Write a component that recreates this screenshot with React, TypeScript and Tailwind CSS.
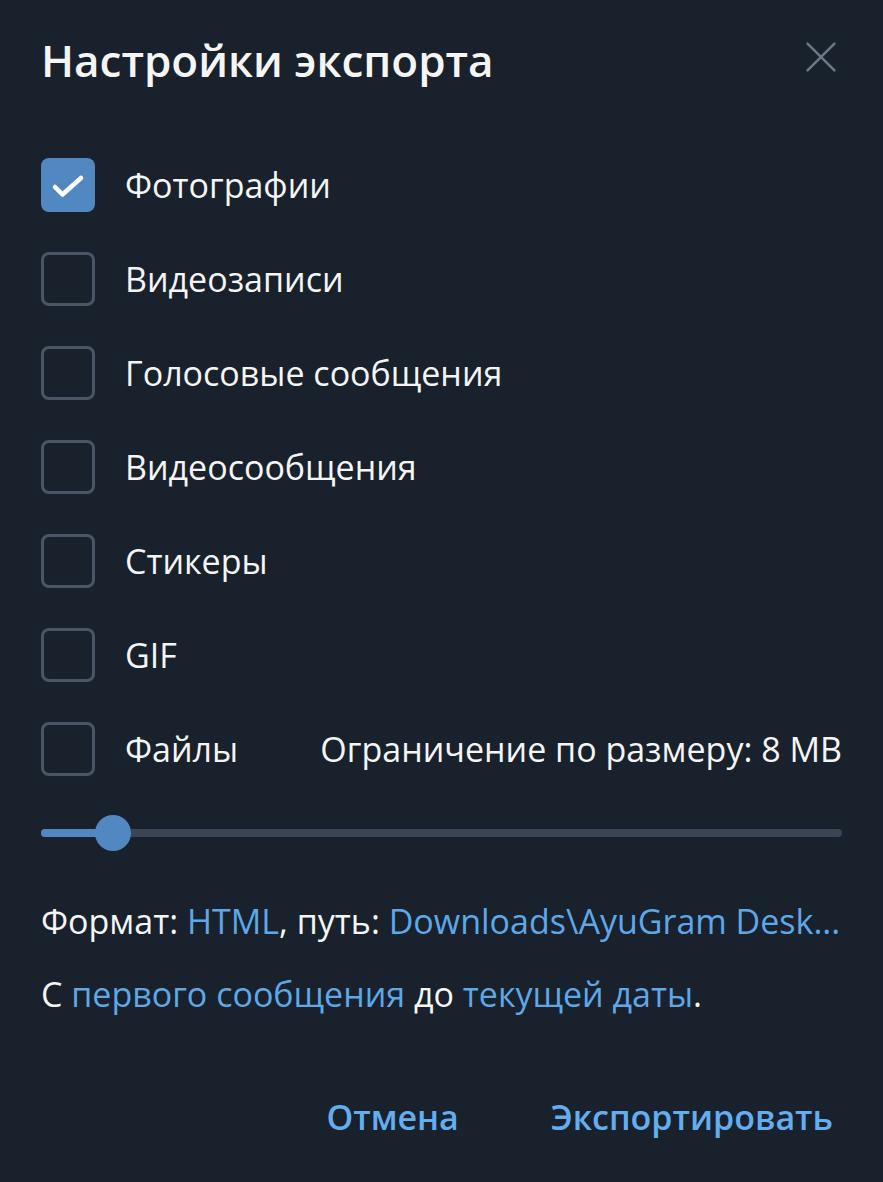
import { useState } from 'react';

const options = [
  'Фотографии',
  'Видеозаписи',
  'Голосовые сообщения',
  'Видеосообщения',
  'Стикеры',
  'GIF',
];

function Checkbox({ checked, onClick }: { checked: boolean; onClick: () => void }) {
  return (
    <button
      onClick={onClick}
      className={
        checked
          ? 'flex h-[54px] w-[54px] shrink-0 items-center justify-center rounded-[8px] bg-[#5288c1]'
          : 'flex h-[54px] w-[54px] shrink-0 items-center justify-center rounded-[8px] border-[3px] border-[#4a5565]'
      }
    >
      {checked && (
        <svg width="54" height="54" viewBox="0 0 54 54" fill="none" stroke="white" strokeWidth="4.5" strokeLinecap="round" strokeLinejoin="round">
          <path d="M14 29l7.5 7.5L40 20" />
        </svg>
      )}
    </button>
  );
}

export default function App() {
  const [checked, setChecked] = useState<boolean[]>([true, false, false, false, false, false, false]);

  const toggle = (i: number) => {
    const next = [...checked];
    next[i] = !next[i];
    setChecked(next);
  };

  return (
    <div
      className="flex h-[1182px] w-[883px] flex-col bg-[#18212c] px-[41px] text-[#f5f5f5]"
      style={{ fontFamily: '"Open Sans", "Noto Sans", sans-serif' }}
    >
      {/* Header */}
      <div className="mt-[32px] flex h-[56px] items-center justify-between">
        <h1 className="text-[44px] font-semibold leading-none text-[#f5f5f5]">Настройки экспорта</h1>
        <button className="mb-[6px] mr-[4px] text-[#6c7884]">
          <svg width="34" height="34" viewBox="0 0 24 24" fill="none" stroke="currentColor" strokeWidth="1.8" strokeLinecap="round">
            <path d="M2.5 2.5l19 19M21.5 2.5l-19 19" />
          </svg>
        </button>
      </div>

      {/* Options */}
      <div className="mt-[70px] flex flex-col gap-[40px]">
        {options.map((label, i) => (
          <div key={label} className="flex h-[54px] items-center">
            <Checkbox checked={checked[i]} onClick={() => toggle(i)} />
            <span className="ml-[30px] text-[34px] leading-none">{label}</span>
          </div>
        ))}
        <div className="flex h-[54px] items-center">
          <Checkbox checked={checked[6]} onClick={() => toggle(6)} />
          <span className="ml-[30px] text-[34px] leading-none">Файлы</span>
          <span className="ml-auto text-[34px] leading-none">Ограничение по размеру: 8 MB</span>
        </div>
      </div>

      {/* Size slider */}
      <div className="relative mt-[39px] h-[36px]">
        <div className="absolute left-0 right-0 top-[14px] h-[8px] rounded-full bg-[#3a4555]" />
        <div className="absolute left-0 top-[14px] h-[8px] w-[72px] rounded-full bg-[#5288c1]" />
        <div className="absolute left-[54px] top-0 h-[36px] w-[36px] rounded-full bg-[#5288c1]" />
      </div>

      {/* Format & range */}
      <div className="mt-[34px] text-[34px] leading-[73px]">
        <p className="whitespace-nowrap">
          Формат: <span className="text-[#5ea8e8]">HTML</span>, путь:{' '}
          <span className="text-[#5ea8e8]">Downloads\AyuGram Desk...</span>
        </p>
        <p className="whitespace-nowrap">
          С <span className="text-[#5ea8e8]">первого сообщения</span> до{' '}
          <span className="text-[#5ea8e8]">текущей даты</span>.
        </p>
      </div>

      {/* Actions */}
      <div className="mt-[69px] flex justify-end gap-[92px] pr-[9px]">
        <button className="text-[34px] font-semibold leading-none text-[#64aef0]">Отмена</button>
        <button className="text-[34px] font-semibold leading-none text-[#64aef0]">Экспортировать</button>
      </div>
    </div>
  );
}
